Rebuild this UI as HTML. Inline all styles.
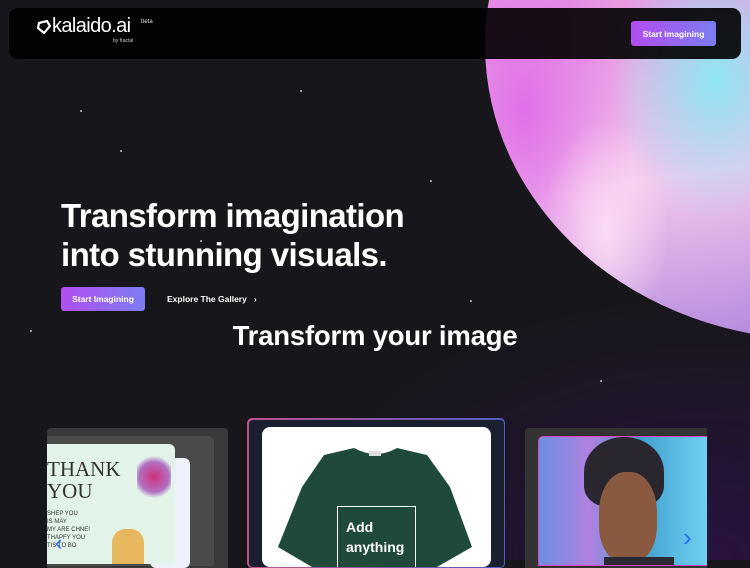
<!DOCTYPE html>
<html><head><style>
*{margin:0;padding:0;box-sizing:border-box}
body{width:750px;height:560px;overflow:hidden;position:relative;font-family:"Liberation Sans",sans-serif;
background:radial-gradient(ellipse 400px 260px at 700px 560px,#2a1240 0%,rgba(30,16,45,0) 100%),#17171b;color:#fff}
.star{position:absolute;width:1.5px;height:1.5px;background:#aaa;border-radius:50%}
.bubble{position:absolute;left:485px;top:-250px;width:670px;height:590px;border-radius:50%;
background:
radial-gradient(ellipse 90px 160px at 120px 480px,rgba(255,225,245,.85),rgba(255,200,240,0) 70%),
radial-gradient(ellipse 150px 200px at 230px 330px,#8fe6f4 0%,rgba(120,220,240,0) 70%),
radial-gradient(ellipse 140px 260px at 40px 360px,#e070e8 0%,rgba(230,120,230,0) 80%),
linear-gradient(170deg,#c9a8f0,#e89ae0 40%,#f3c8ec 65%,#9a70d8);}
.nav{position:absolute;left:9px;top:8px;width:732px;height:51px;background:rgba(0,0,0,.9);border-radius:9px}
.btn{position:absolute;background:linear-gradient(90deg,#b14ef0,#7c7cf2);border-radius:3px;font-weight:bold;font-size:8.5px;display:flex;align-items:center;justify-content:center;color:#fff}
h1{position:absolute;left:61px;top:196px;font-size:33px;line-height:39px;font-weight:bold;letter-spacing:-.6px}
h2{position:absolute;left:0;width:750px;text-align:center;top:320px;font-size:27.5px;font-weight:bold;letter-spacing:-.2px}
</style></head><body>
<div class="bubble"></div>
<div class="star" style="left:120px;top:150px"></div><div class="star" style="left:300px;top:90px"></div>
<div class="star" style="left:200px;top:240px"></div><div class="star" style="left:430px;top:180px"></div>
<div class="star" style="left:600px;top:380px"></div><div class="star" style="left:30px;top:330px"></div>
<div class="star" style="left:470px;top:300px"></div><div class="star" style="left:80px;top:110px"></div>
<div class="nav"></div>
<svg style="position:absolute;left:37px;top:20px" width="14" height="14" viewBox="0 0 14 14"><path d="M2 3 L10 1 L13 6 L7 13 L1 8 Z" fill="none" stroke="#fff" stroke-width="2.2"/></svg>
<div style="position:absolute;left:52px;top:15px;font-size:20px;color:#fff;letter-spacing:-.6px">kalaido.ai</div>
<div style="position:absolute;left:141px;top:19px;font-size:6px;color:#ddd">beta</div>
<div style="position:absolute;left:113px;top:38px;font-size:5px;color:#ccc">by fractal</div>
<div class="btn" style="left:631px;top:21px;width:85px;height:25px">Start Imagining</div>
<h1>Transform imagination<br>into stunning visuals.</h1>
<div class="btn" style="left:61px;top:287px;width:84px;height:24px">Start Imagining</div>
<div style="position:absolute;left:167px;top:294px;font-size:8.5px;font-weight:bold">Explore The Gallery &nbsp;&nbsp;›</div>
<h2>Transform your image</h2>
<div style="position:absolute;left:47px;top:428px;width:181px;height:140px;background:#3a3a3a;border-radius:4px 4px 0 0"></div>
<div style="position:absolute;left:47px;top:436px;width:167px;height:130px;background:#4a4a4a;border-radius:0 6px 0 0"></div>
<div style="position:absolute;left:150px;top:458px;width:40px;height:110px;background:#eef0fa;border-radius:6px"></div>
<div style="position:absolute;left:47px;top:444px;width:128px;height:120px;background:#e2f4ea;border-radius:0 6px 0 0;overflow:hidden">
<div style="font-family:'Liberation Serif',serif;font-size:21px;color:#333;line-height:22px;margin-top:14px">THANK<br>YOU</div>
<div style="font-size:6px;color:#333;line-height:8px;margin-top:8px">SHEP YOU<br>IS MAY<br>MY ARE CHNE!<br>THAPFY YOU<br>TIS TO BO</div>
<div style="position:absolute;left:90px;top:8px;width:34px;height:50px;background:radial-gradient(circle,#d0307a,#b070c0 50%,transparent 70%)"></div>
<div style="position:absolute;left:65px;top:85px;width:32px;height:35px;background:#e8b860;border-radius:40% 40% 0 0"></div>
</div>
<div style="position:absolute;left:55px;top:530px;color:#2a6ef0;font-size:22px">‹</div>
<div style="position:absolute;left:247px;top:418px;width:258px;height:150px;border-radius:5px;padding:1.5px;background:linear-gradient(90deg,#c0508a,#5060c0)"><div style="width:100%;height:100%;background:#1a2030;border-radius:4px"></div></div>
<div style="position:absolute;left:262px;top:427px;width:229px;height:140px;background:#fff;border-radius:8px;overflow:hidden">
<svg width="229" height="140" viewBox="0 0 229 140"><path d="M92 21 L62 28 L40 60 L16 120 L50 140 L175 140 L210 120 L188 60 L165 28 L135 21 Q114 33 92 21 Z" fill="#1f4a3a"/><rect x="107" y="24" width="12" height="5" fill="#ddd"/></svg>
<div style="position:absolute;left:75px;top:79px;width:79px;height:70px;border:1.5px solid #fff;color:#fff;font-weight:bold;font-size:14px;padding:10px 8px;line-height:20px">Add<br>anything</div>
</div>
<div style="position:absolute;left:525px;top:428px;width:182px;height:140px;background:#333;border-radius:4px 0 0 0"></div>
<div style="position:absolute;left:538px;top:436px;width:169px;height:130px;border:1.5px solid #e040c0;border-right:none;border-radius:5px 0 0 0;overflow:hidden;background:linear-gradient(90deg,#6a90e0,#b080e0 30%,#40a0d0 60%,#70d0f0)">
<div style="position:absolute;left:45px;top:0;width:80px;height:70px;background:#2a2630;border-radius:50% 50% 30% 30%"></div>
<div style="position:absolute;left:60px;top:35px;width:58px;height:90px;background:#8a5a40;border-radius:45% 45% 40% 40%"></div>
<div style="position:absolute;left:65px;top:120px;width:70px;height:20px;background:#2a2a35"></div>
</div>
<div style="position:absolute;left:683px;top:522px;color:#2a6ef0;font-size:26px">›</div>
</body></html>
